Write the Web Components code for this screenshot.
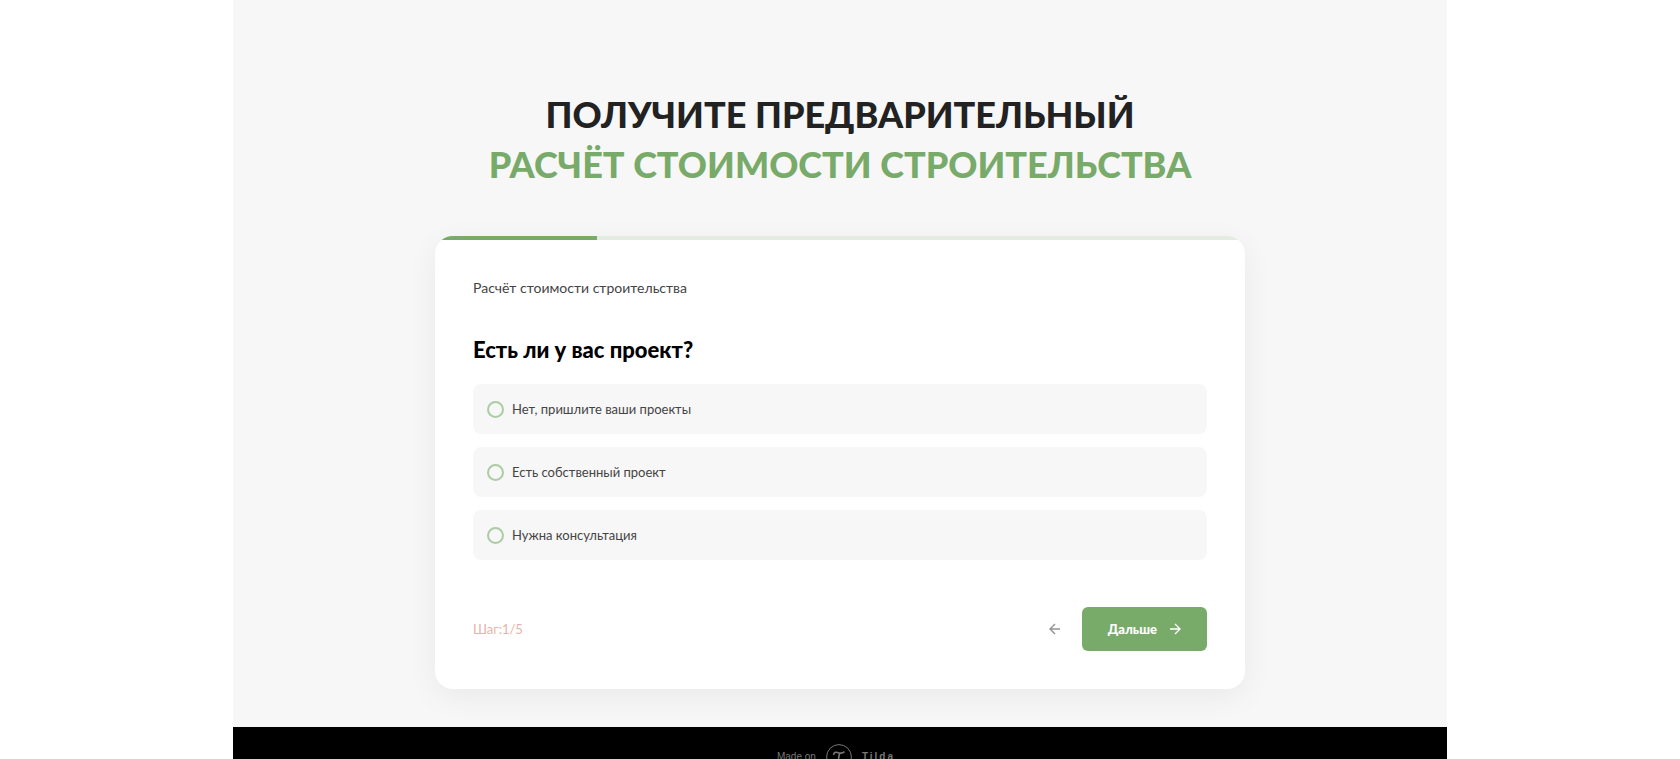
<!DOCTYPE html>
<html lang="ru">
<head>
    <meta charset="UTF-8">
    <meta name="viewport" content="width=device-width, initial-scale=1.0">
    <title>Расчёт стоимости строительства</title>
    <style>
        :root {
            --green: #78aa69;
            --green-light: #e4ece2;
            --green-border: #accca5;
            --panel: #f7f7f7;
            --text-soft: #444444;
        }

        body {
            margin: 0;
            background-color: #ffffff;
            color: #222222;
            font-family: Lato, "Open Sans", sans-serif;
        }

        .page {
            max-width: 1214px;
            margin: 0 auto;
        }
    </style>
</head>
<body>
    <div class="page">
        <quiz-section>
            <span slot="title">Получите предварительный</span>
            <span slot="accent">расчёт стоимости строительства</span>
            <quiz-card step="1" total="5">
                <span slot="name">Расчёт стоимости строительства</span>
                <span slot="question">Есть ли у вас проект?</span>
                <quiz-option value="no">Нет, пришлите ваши проекты</quiz-option>
                <quiz-option value="own">Есть собственный проект</quiz-option>
                <quiz-option value="help">Нужна консультация</quiz-option>
            </quiz-card>
        </quiz-section>
        <made-on-label></made-on-label>
    </div>

    <script>
        class QuizSection extends HTMLElement {
            constructor() {
                super();
                this.attachShadow({ mode: 'open' });
            }

            connectedCallback() {
                this.shadowRoot.innerHTML = `
                    <style>
                        :host {
                            display: block;
                            padding: 89px 20px 38px;
                            background-color: var(--panel);
                        }

                        h1 {
                            margin: 0 0 47px;
                            font-size: 36px;
                            line-height: 50px;
                            font-weight: 900;
                            text-align: center;
                            text-transform: uppercase;
                        }

                        h1 slot {
                            display: block;
                        }

                        .accent {
                            color: var(--green);
                        }
                    </style>
                    <h1><slot name="title"></slot><slot name="accent" class="accent"></slot></h1>
                    <slot></slot>
                `;
            }
        }

        class QuizCard extends HTMLElement {
            constructor() {
                super();
                this.attachShadow({ mode: 'open' });
            }

            connectedCallback() {
                const step = Number(this.getAttribute('step'));
                const total = Number(this.getAttribute('total'));

                this.shadowRoot.innerHTML = `
                    <style>
                        :host {
                            display: block;
                            max-width: 810px;
                            margin: 0 auto;
                            overflow: hidden;
                            border-radius: 18px;
                            background-color: #ffffff;
                            box-shadow: 0 8px 32px rgba(0, 0, 0, 0.06);
                        }

                        .progress {
                            height: 4px;
                            background-color: var(--green-light);
                        }

                        .bar {
                            width: ${step / total * 100}%;
                            height: 100%;
                            background-color: var(--green);
                        }

                        .content {
                            padding: 38px;
                        }

                        .name {
                            margin: 0 0 38px;
                            color: var(--text-soft);
                            font-size: 14px;
                            line-height: 20px;
                            font-weight: 400;
                        }

                        fieldset {
                            margin: 0;
                            padding: 0;
                            border: none;
                        }

                        legend {
                            padding: 0;
                            margin-bottom: 20px;
                            color: #000000;
                            font-size: 22px;
                            line-height: 28px;
                            font-weight: 900;
                        }

                        .options {
                            display: grid;
                            gap: 13px;
                        }

                        .controls {
                            display: flex;
                            align-items: center;
                            margin-top: 47px;
                        }

                        .step {
                            margin-right: auto;
                            color: #e9b3ac;
                            font-size: 13px;
                            font-weight: 400;
                        }

                        button {
                            display: flex;
                            align-items: center;
                            justify-content: center;
                            gap: 12px;
                            height: 44px;
                            padding: 0 26px;
                            border: none;
                            border-radius: 6px;
                            font-family: inherit;
                            font-size: 13px;
                            font-weight: 900;
                            cursor: pointer;
                        }

                        .prev {
                            padding: 0 21px;
                            background: none;
                            color: #929292;
                        }

                        .next {
                            background-color: var(--green);
                            color: #ffffff;
                        }

                        svg {
                            display: block;
                            width: 12px;
                            height: 12px;
                            fill: none;
                            stroke: currentColor;
                            stroke-width: 1.4;
                        }
                    </style>
                    <div class="progress"><div class="bar"></div></div>
                    <div class="content">
                        <p class="name"><slot name="name"></slot></p>
                        <fieldset>
                            <legend><slot name="question"></slot></legend>
                            <div class="options"><slot></slot></div>
                        </fieldset>
                        <div class="controls">
                            <span class="step">Шаг:${step}/${total}</span>
                            <button type="button" class="prev" aria-label="Назад">
                                <svg viewBox="0 0 12 12"><path d="M11 6H1.2M6 1 1 6l5 5"/></svg>
                            </button>
                            <button type="button" class="next">
                                Дальше
                                <svg viewBox="0 0 12 12"><path d="M1 6h9.8M6 1l5 5-5 5"/></svg>
                            </button>
                        </div>
                    </div>
                `;
                this.addEventListener('change', (event) => this.selectOnly(event.target));
            }

            // radios live in separate shadow roots, so they can't share a native group
            selectOnly(option) {
                this.querySelectorAll('quiz-option').forEach((item) => {
                    if (item !== option) {
                        item.checked = false;
                    }
                });
            }
        }

        class QuizOption extends HTMLElement {
            constructor() {
                super();
                this.attachShadow({ mode: 'open' });
            }

            connectedCallback() {
                this.shadowRoot.innerHTML = `
                    <style>
                        :host {
                            display: block;
                        }

                        label {
                            display: flex;
                            align-items: center;
                            gap: 8px;
                            min-height: 50px;
                            padding: 0 14px;
                            box-sizing: border-box;
                            border-radius: 8px;
                            background-color: var(--panel);
                            color: var(--text-soft);
                            font-size: 13px;
                            line-height: 18px;
                            font-weight: 400;
                            cursor: pointer;
                        }

                        input {
                            appearance: none;
                            flex: none;
                            width: 17px;
                            height: 17px;
                            margin: 0;
                            border: 2px solid var(--green-border);
                            border-radius: 50%;
                        }

                        input:checked {
                            border: 5px solid var(--green);
                        }
                    </style>
                    <label><input type="radio" value="${this.getAttribute('value')}"><span><slot></slot></span></label>
                `;
                this.input = this.shadowRoot.querySelector('input');
                this.input.addEventListener('change', () => {
                    this.dispatchEvent(new Event('change', { bubbles: true }));
                });
            }

            set checked(value) {
                this.input.checked = value;
            }
        }

        class MadeOnLabel extends HTMLElement {
            constructor() {
                super();
                this.attachShadow({ mode: 'open' });
            }

            connectedCallback() {
                this.shadowRoot.innerHTML = `
                    <style>
                        :host {
                            display: block;
                            background-color: #000000;
                        }

                        a {
                            display: flex;
                            align-items: center;
                            justify-content: center;
                            gap: 10px;
                            height: 60px;
                            padding-right: 8px;
                            color: #777777;
                            font-family: "Liberation Sans", Arial, sans-serif;
                            font-size: 10px;
                            line-height: 12px;
                            text-decoration: none;
                        }

                        svg {
                            width: 26px;
                            height: 26px;
                            fill: none;
                            stroke: currentColor;
                        }

                        .brand {
                            font-weight: 700;
                            letter-spacing: 2px;
                        }
                    </style>
                    <a href="#">
                        <span>Made on</span>
                        <svg viewBox="0 0 26 26">
                            <circle cx="13" cy="13" r="12.4"/>
                            <path stroke-width="1.6" d="M7.500 10.800c.5-2.300 2-3 3.800-2.400 2.500.9 4.700 1.500 7.200-.7M13.500 9.500c-.7 3-1 5-1 7 0 2 1.800 2 3.500.8"/>
                        </svg>
                        <span class="brand">Tilda</span>
                    </a>
                `;
            }
        }

        customElements.define('quiz-section', QuizSection);
        customElements.define('quiz-card', QuizCard);
        customElements.define('quiz-option', QuizOption);
        customElements.define('made-on-label', MadeOnLabel);
    </script>
</body>
</html>
